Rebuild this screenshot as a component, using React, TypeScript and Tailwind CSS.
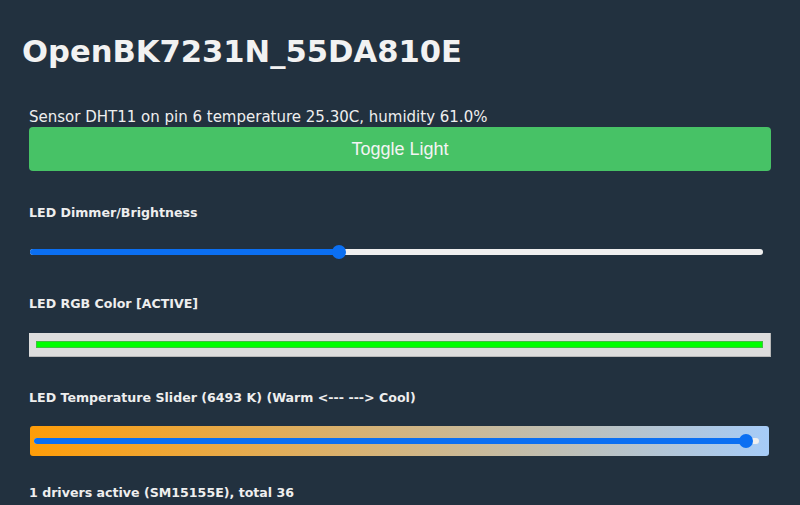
import React from 'react';

const labelCls = "text-[12.6px] font-bold leading-[16px] text-[#eeeeee]";

function Slider({ pos }: { pos: number }) {
  // pos in px from track left
  return (
    <div className="relative h-[20px]">
      <div className="absolute left-0 right-0 top-[7px] h-[6px] rounded-full bg-[#efefef]" />
      <div className="absolute left-0 top-[7px] h-[6px] rounded-full bg-[#0b6ff2]" style={{ width: pos }} />
      <div
        className="absolute top-[3px] h-[14px] w-[14px] rounded-full bg-[#0b6ff2]"
        style={{ left: pos - 7 }}
      />
    </div>
  );
}

export default function App() {
  return (
    <div className="min-h-[505px] w-full bg-[#22313f] font-['DejaVu_Sans',Verdana,sans-serif] text-[#eeeeee]">
      <div className="px-[22px] pt-[34px]">
        <h1 className="text-[30.6px] font-bold leading-[36px] text-[#f2f2f2]">OpenBK7231N_55DA810E</h1>
      </div>
      <div className="pl-[29px] pr-[29px]">
        <div className="mt-[38px] text-[15px] leading-[18px]">
          Sensor DHT11 on pin 6 temperature 25.30C, humidity 61.0%
        </div>
        <button className="mt-[1px] flex h-[44px] w-full items-center justify-center rounded-[4px] bg-[#47c266] font-['Liberation_Sans',Arial,sans-serif] text-[18px] text-[#f4f4f4]">
          Toggle Light
        </button>

        <div className={`mt-[34px] ${labelCls}`}>LED Dimmer/Brightness</div>
        <div className="mt-[21px] pl-[1px] pr-[8px]">
          <Slider pos={309} />
        </div>

        <div className={`mt-[34px] ${labelCls}`}>LED RGB Color [ACTIVE]</div>
        <div className="mt-[21px] flex h-[24px] items-center border-b border-r border-[#b8b8b8] bg-[#dddddd] px-[7px]">
          <div className="h-[7px] w-full bg-[#00ff00] shadow-[inset_0_0_0_1px_#40c040]" />
        </div>

        <div className={`mt-[33px] ${labelCls}`}>LED Temperature Slider (6493 K) (Warm &lt;--- ---&gt; Cool)</div>
        <div className="mt-[20px] ml-[1px] mr-[2px] flex h-[30px] items-center rounded-[3px] bg-[linear-gradient(to_right,#ff9d08,#a6ccf8)] pl-[4px] pr-[10px]">
          <div className="w-full">
            <Slider pos={712} />
          </div>
        </div>

        <div className={`mt-[29px] ${labelCls}`}>1 drivers active (SM15155E), total 36</div>
      </div>
    </div>
  );
}
